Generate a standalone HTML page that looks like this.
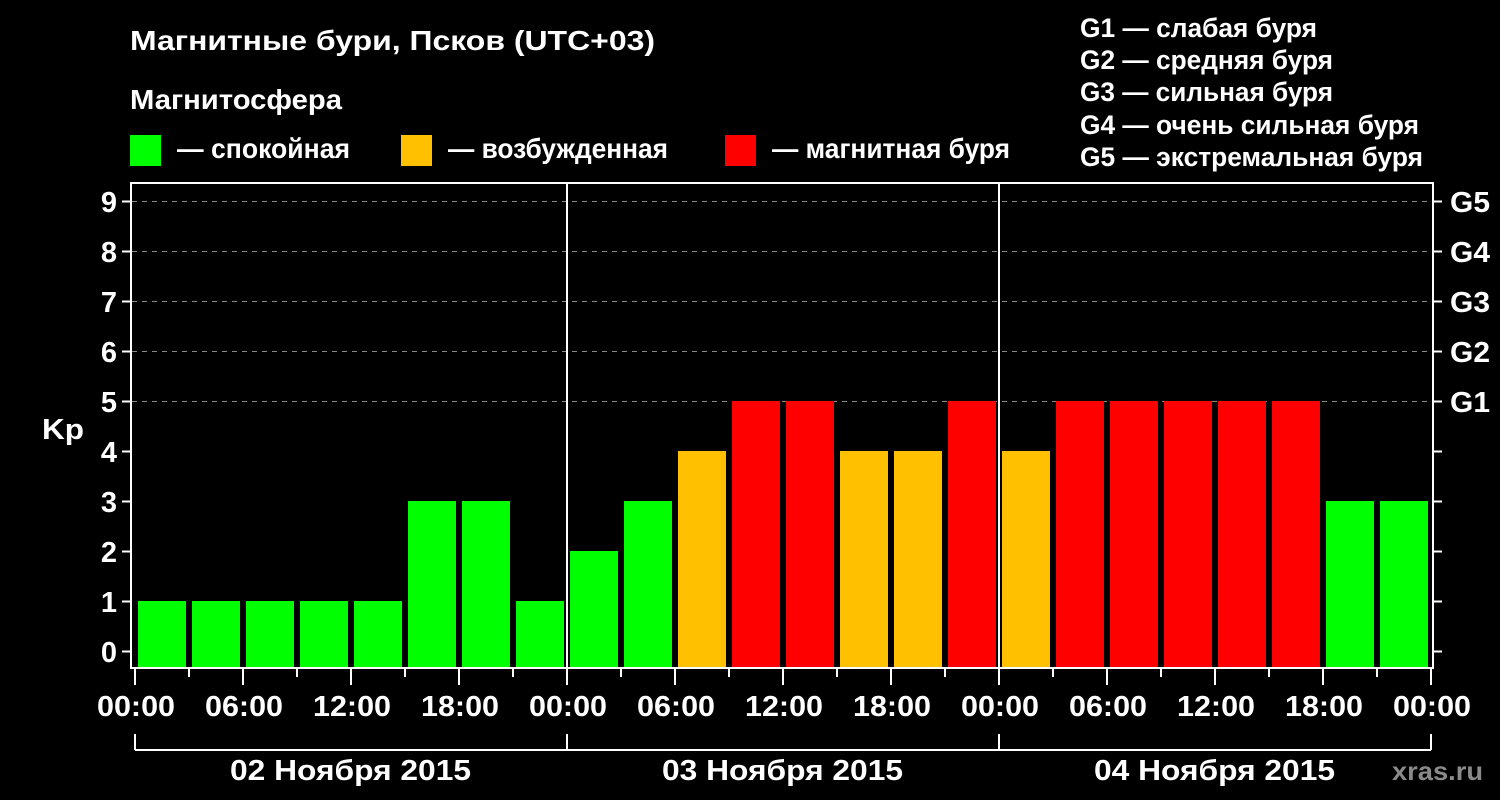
<!DOCTYPE html>
<html><head><meta charset="utf-8"><style>
html,body{margin:0;padding:0;background:#000;width:1500px;height:800px;overflow:hidden}
svg{display:block}
text{font-family:"Liberation Sans",Arial,sans-serif;font-weight:bold;fill:#fff}
</style></head><body>
<svg width="1500" height="800" viewBox="0 0 1500 800" xmlns="http://www.w3.org/2000/svg">
<rect width="1500" height="800" fill="#000"/>
<text x="130" y="50" font-size="28" textLength="525" lengthAdjust="spacingAndGlyphs">Магнитные бури, Псков (UTC+03)</text>
<text x="130" y="109" font-size="28" textLength="212" lengthAdjust="spacingAndGlyphs">Магнитосфера</text>
<rect x="130" y="135" width="31" height="31" fill="#00ff00"/>
<text x="177" y="158" font-size="28" textLength="173" lengthAdjust="spacingAndGlyphs">— спокойная</text>
<rect x="401" y="135" width="31" height="31" fill="#ffc000"/>
<text x="448" y="158" font-size="28" textLength="220" lengthAdjust="spacingAndGlyphs">— возбужденная</text>
<rect x="725" y="135" width="31" height="31" fill="#ff0000"/>
<text x="772" y="158" font-size="28" textLength="238" lengthAdjust="spacingAndGlyphs">— магнитная буря</text>
<g font-size="27">
<text x="1080" y="37" textLength="237" lengthAdjust="spacingAndGlyphs">G1 — слабая буря</text>
<text x="1080" y="69" textLength="253" lengthAdjust="spacingAndGlyphs">G2 — средняя буря</text>
<text x="1080" y="101" textLength="253" lengthAdjust="spacingAndGlyphs">G3 — сильная буря</text>
<text x="1080" y="134" textLength="339" lengthAdjust="spacingAndGlyphs">G4 — очень сильная буря</text>
<text x="1080" y="166" textLength="343" lengthAdjust="spacingAndGlyphs">G5 — экстремальная буря</text>
</g>
<g stroke="#888" stroke-width="1" stroke-dasharray="5,5">
<line x1="132" y1="201.5" x2="1433" y2="201.5"/>
<line x1="132" y1="251.5" x2="1433" y2="251.5"/>
<line x1="132" y1="301.5" x2="1433" y2="301.5"/>
<line x1="132" y1="351.5" x2="1433" y2="351.5"/>
<line x1="132" y1="401.5" x2="1433" y2="401.5"/>
</g>
<g>
<rect x="138" y="601" width="48" height="67" fill="#00ff00"/>
<rect x="192" y="601" width="48" height="67" fill="#00ff00"/>
<rect x="246" y="601" width="48" height="67" fill="#00ff00"/>
<rect x="300" y="601" width="48" height="67" fill="#00ff00"/>
<rect x="354" y="601" width="48" height="67" fill="#00ff00"/>
<rect x="408" y="501" width="48" height="167" fill="#00ff00"/>
<rect x="462" y="501" width="48" height="167" fill="#00ff00"/>
<rect x="516" y="601" width="48" height="67" fill="#00ff00"/>
<rect x="570" y="551" width="48" height="117" fill="#00ff00"/>
<rect x="624" y="501" width="48" height="167" fill="#00ff00"/>
<rect x="678" y="451" width="48" height="217" fill="#ffc000"/>
<rect x="732" y="401" width="48" height="267" fill="#ff0000"/>
<rect x="786" y="401" width="48" height="267" fill="#ff0000"/>
<rect x="840" y="451" width="48" height="217" fill="#ffc000"/>
<rect x="894" y="451" width="48" height="217" fill="#ffc000"/>
<rect x="948" y="401" width="48" height="267" fill="#ff0000"/>
<rect x="1002" y="451" width="48" height="217" fill="#ffc000"/>
<rect x="1056" y="401" width="48" height="267" fill="#ff0000"/>
<rect x="1110" y="401" width="48" height="267" fill="#ff0000"/>
<rect x="1164" y="401" width="48" height="267" fill="#ff0000"/>
<rect x="1218" y="401" width="48" height="267" fill="#ff0000"/>
<rect x="1272" y="401" width="48" height="267" fill="#ff0000"/>
<rect x="1326" y="501" width="48" height="167" fill="#00ff00"/>
<rect x="1380" y="501" width="48" height="167" fill="#00ff00"/>
</g>
<g stroke="#fff" stroke-width="2" fill="none">
<rect x="131" y="183" width="1302" height="485"/>
<line x1="567" y1="183" x2="567" y2="668"/>
<line x1="999" y1="183" x2="999" y2="668"/>
<path d="M122 201.5H131M122 251.5H131M122 301.5H131M122 351.5H131M122 401.5H131M122 451.5H131M122 501.5H131M122 551.5H131M122 601.5H131M122 651.5H131"/>
<path d="M1433 201.5H1442M1433 251.5H1442M1433 301.5H1442M1433 351.5H1442M1433 401.5H1442M1433 451.5H1442M1433 501.5H1442M1433 551.5H1442M1433 601.5H1442M1433 651.5H1442"/>
<path d="M135 668V685M243 668V685M351 668V685M459 668V685M567 668V685M675 668V685M783 668V685M891 668V685M999 668V685M1107 668V685M1215 668V685M1323 668V685M1431 668V685"/>
<path d="M189 668V677M297 668V677M405 668V677M513 668V677M621 668V677M729 668V677M837 668V677M945 668V677M1053 668V677M1161 668V677M1269 668V677M1377 668V677"/>
<path d="M135 750H1431M135 734V750M567 734V750M999 734V750M1431 734V750"/>
</g>
<g font-size="29" text-anchor="end">
<text x="117" y="212">9</text><text x="117" y="262">8</text><text x="117" y="312">7</text>
<text x="117" y="362">6</text><text x="117" y="412">5</text><text x="117" y="462">4</text>
<text x="117" y="512">3</text><text x="117" y="562">2</text><text x="117" y="612">1</text>
<text x="117" y="662">0</text>
</g>
<text x="42" y="439" font-size="29" textLength="42" lengthAdjust="spacingAndGlyphs">Kp</text>
<g font-size="29">
<text x="1450" y="212" textLength="40" lengthAdjust="spacingAndGlyphs">G5</text>
<text x="1450" y="262" textLength="40" lengthAdjust="spacingAndGlyphs">G4</text>
<text x="1450" y="312" textLength="40" lengthAdjust="spacingAndGlyphs">G3</text>
<text x="1450" y="362" textLength="40" lengthAdjust="spacingAndGlyphs">G2</text>
<text x="1450" y="412" textLength="40" lengthAdjust="spacingAndGlyphs">G1</text>
</g>
<g font-size="29">
<text x="97" y="716" textLength="78" lengthAdjust="spacingAndGlyphs">00:00</text>
<text x="205" y="716" textLength="78" lengthAdjust="spacingAndGlyphs">06:00</text>
<text x="313" y="716" textLength="78" lengthAdjust="spacingAndGlyphs">12:00</text>
<text x="421" y="716" textLength="78" lengthAdjust="spacingAndGlyphs">18:00</text>
<text x="529" y="716" textLength="78" lengthAdjust="spacingAndGlyphs">00:00</text>
<text x="637" y="716" textLength="78" lengthAdjust="spacingAndGlyphs">06:00</text>
<text x="745" y="716" textLength="78" lengthAdjust="spacingAndGlyphs">12:00</text>
<text x="853" y="716" textLength="78" lengthAdjust="spacingAndGlyphs">18:00</text>
<text x="961" y="716" textLength="78" lengthAdjust="spacingAndGlyphs">00:00</text>
<text x="1069" y="716" textLength="78" lengthAdjust="spacingAndGlyphs">06:00</text>
<text x="1177" y="716" textLength="78" lengthAdjust="spacingAndGlyphs">12:00</text>
<text x="1285" y="716" textLength="78" lengthAdjust="spacingAndGlyphs">18:00</text>
<text x="1393" y="716" textLength="78" lengthAdjust="spacingAndGlyphs">00:00</text>
<text x="230" y="780" textLength="241" lengthAdjust="spacingAndGlyphs">02 Ноября 2015</text>
<text x="662" y="780" textLength="241" lengthAdjust="spacingAndGlyphs">03 Ноября 2015</text>
<text x="1094" y="780" textLength="241" lengthAdjust="spacingAndGlyphs">04 Ноября 2015</text>
</g>
<text x="1392" y="780" font-size="26" textLength="91" lengthAdjust="spacingAndGlyphs" style="fill:#8a8a8a">xras.ru</text>
</svg>
</body></html>
